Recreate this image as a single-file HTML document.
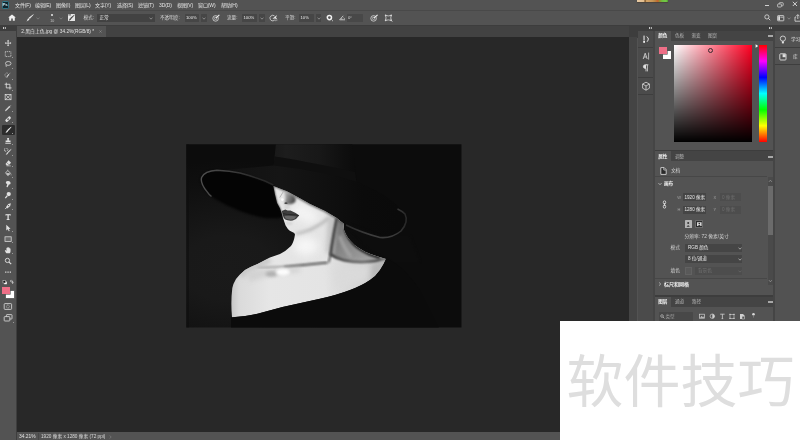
<!DOCTYPE html>
<html lang="zh-CN">
<head>
<meta charset="utf-8">
<title>Photoshop</title>
<style>
html,body{margin:0;padding:0;}
body{width:800px;height:440px;overflow:hidden;background:#535353;position:relative;font-family:"Liberation Sans","Noto Sans CJK SC",sans-serif;color:#d6d6d6;}
.abs{position:absolute;}
.t{position:absolute;white-space:nowrap;font-size:5px;line-height:6px;color:#e4e4e4;letter-spacing:-0.1px;}
.t,.tt,.tb,#wmtext{filter:grayscale(1);}
#menubar{left:0;top:0;width:800px;height:10px;background:#535353;}
#optbar{left:0;top:10.8px;width:800px;height:14.6px;background:#535353;}
#sep1{left:0;top:9.8px;width:800px;height:1px;background:#494949;}
#tabbar{left:0;top:25.4px;width:800px;height:12.6px;background:#3d3d3d;}
#canvas{left:17px;top:37.4px;width:612.4px;height:395px;background:#282828;}
#ltool{left:0;top:30px;width:16px;height:410px;background:#535353;}
#status{left:17px;top:432.4px;width:612.4px;height:8px;background:#535353;}
#tab{left:17px;top:26px;width:88.6px;height:11px;background:#535353;}
#tabrest{left:106.4px;top:26px;width:523px;height:11px;background:#424242;}
#vscroll{left:629.4px;top:37.4px;width:8.1px;height:403px;background:#444444;}
#rdark{left:637.5px;top:25px;width:162.5px;height:415px;background:#3d3d3d;}
#istrip{left:637.5px;top:30.6px;width:15.8px;height:410px;background:#4b4b4b;}
#cpanel{left:655px;top:30.6px;width:118px;height:119.6px;background:#535353;}
#ppanel{left:655px;top:151.4px;width:118px;height:143.6px;background:#535353;}
#lpanel{left:655px;top:296.6px;width:118px;height:144px;background:#535353;}
#farright{left:775px;top:31px;width:25px;height:409px;background:#525252;}
.tabrow{position:absolute;left:655px;width:118px;height:10px;background:#444444;}
.atab{position:absolute;left:655px;width:16px;height:10px;background:#535353;}
.tt{position:absolute;white-space:nowrap;font-size:4.6px;line-height:6px;color:#b4b4b4;}
.tb{position:absolute;white-space:nowrap;font-size:4.6px;line-height:6px;color:#f2f2f2;font-weight:bold;}
.ham{position:absolute;left:767.5px;width:5px;height:3.4px;background:linear-gradient(#a8a8a8 0 0.8px,transparent 0.8px 1.3px,#a8a8a8 1.3px 2.1px,transparent 2.1px 2.6px,#a8a8a8 2.6px 3.4px);}
.fld{position:absolute;height:8px;background:#454545;border-radius:0.5px;}
.fldd{position:absolute;height:8px;background:#4d4d4d;border-radius:0.5px;}
#wm{left:560px;top:321px;width:240px;height:119px;background:#fff;}
#wmtext{left:566.5px;top:347px;font-size:57px;line-height:70px;color:#dedede;white-space:nowrap;letter-spacing:0px;}
</style>
</head>
<body>
<div id="menubar" class="abs"></div>
<div id="sep1" class="abs"></div>
<div id="optbar" class="abs"></div>
<div id="tabbar" class="abs"></div>
<div id="canvas" class="abs"></div>
<div id="ltool" class="abs"></div>
<div id="status" class="abs"></div>
<div id="tab" class="abs"></div>
<div id="tabrest" class="abs"></div>
<div id="vscroll" class="abs"></div>
<div id="rdark" class="abs"></div>
<div id="istrip" class="abs"></div>
<div id="cpanel" class="abs"></div>
<div id="ppanel" class="abs"></div>
<div id="lpanel" class="abs"></div>
<div id="farright" class="abs"></div>
<div class="abs" style="left:653.3px;top:31px;width:1.7px;height:409px;background:#454545;"></div>
<div class="abs" style="left:773px;top:31px;width:2px;height:409px;background:#454545;"></div>

<!-- RIGHT-START -->
<!-- color panel -->
<div class="tabrow" style="top:30.6px;"></div>
<div class="atab" style="top:30.6px;"></div>
<div class="tb" style="left:658.2px;top:32.6px;">颜色</div>
<div class="tt" style="left:675px;top:32.6px;">色板</div>
<div class="tt" style="left:691.5px;top:32.6px;">渐变</div>
<div class="tt" style="left:708px;top:32.6px;">图案</div>
<div class="ham" style="top:34.5px;"></div>
<div class="abs" style="left:663px;top:51px;width:7.8px;height:7.8px;background:#fff;"></div>
<div class="abs" style="left:659px;top:47.1px;width:7.6px;height:7.2px;background:#ee6f87;box-shadow:0 0 0 0.6px #555;"></div>
<div class="abs" style="left:673.6px;top:44.9px;width:78.6px;height:96.8px;background:linear-gradient(to bottom,rgba(0,0,0,0),#000),linear-gradient(to right,#fff,#ff0022);"></div>
<div class="abs" style="left:708px;top:47.5px;width:3.2px;height:3.2px;border:0.7px solid #3a2a30;border-radius:50%;"></div>
<div class="abs" style="left:758.6px;top:44.9px;width:8.6px;height:96.8px;background:linear-gradient(to bottom,#ff0000 0%,#ff00ff 16.6%,#0000ff 33.3%,#00ffff 50%,#00ff00 66.6%,#ffff00 83.3%,#ff0000 100%);"></div>
<svg class="abs" style="left:754.8px;top:43.6px" width="4" height="4" viewBox="0 0 4 4"><path d="M0.6 0.3 L3.2 2 L0.6 3.7 Z" fill="#fff"/></svg>

<!-- properties panel -->
<div class="tabrow" style="top:151.4px;"></div>
<div class="atab" style="top:151.4px;"></div>
<div class="tb" style="left:658.2px;top:153.6px;">属性</div>
<div class="tt" style="left:675px;top:153.6px;">调整</div>
<div class="ham" style="top:155.5px;"></div>
<svg class="abs" style="left:660px;top:166.5px" width="7" height="8" viewBox="0 0 7 8"><path d="M0.8 0.6 H4.2 L6.2 2.6 V7.4 H0.8 Z" fill="#2a2a2a" stroke="#e8e8e8" stroke-width="0.8"/><path d="M3.8 0.8 V3 H6" fill="none" stroke="#e8e8e8" stroke-width="0.7"/></svg>
<div class="tt" style="left:671px;top:168px;color:#dcdcdc;">文档</div>
<div class="abs" style="left:655px;top:176px;width:112px;height:1px;background:#474747;"></div>
<svg class="abs" style="left:657.5px;top:182px" width="4" height="4" viewBox="0 0 4 4"><path d="M0.4 1 L2 2.8 L3.6 1" fill="none" stroke="#c8c8c8" stroke-width="0.7"/></svg>
<div class="tb" style="left:664px;top:181px;">画布</div>
<div class="tt" style="left:677.3px;top:194.7px;font-size:4px;color:#a0a0a0;">W</div>
<div class="fld" style="left:683.4px;top:193.4px;width:22.5px;"></div>
<div class="tt" style="left:684.5px;top:194.5px;color:#e6e6e6;">1920 像素</div>
<div class="tt" style="left:713.6px;top:194.7px;font-size:4px;color:#a0a0a0;">X</div>
<div class="fldd" style="left:719.7px;top:193.4px;width:21.5px;"></div>
<div class="tt" style="left:722px;top:194.5px;color:#6c6c6c;">0 像素</div>
<div class="tt" style="left:677.6px;top:206.9px;font-size:4px;color:#a0a0a0;">H</div>
<div class="fld" style="left:683.4px;top:205.6px;width:22.5px;"></div>
<div class="tt" style="left:684.5px;top:206.7px;color:#e6e6e6;">1280 像素</div>
<div class="tt" style="left:713.6px;top:206.9px;font-size:4px;color:#a0a0a0;">Y</div>
<div class="fldd" style="left:719.7px;top:205.6px;width:21.5px;"></div>
<div class="tt" style="left:722px;top:206.7px;color:#6c6c6c;">0 像素</div>
<svg class="abs" style="left:661.5px;top:199.5px" width="5" height="9" viewBox="0 0 5 9"><rect x="1.3" y="0.8" width="2.4" height="3.2" rx="1.2" fill="none" stroke="#e0e0e0" stroke-width="0.8"/><rect x="1.3" y="5" width="2.4" height="3.2" rx="1.2" fill="none" stroke="#e0e0e0" stroke-width="0.8"/><path d="M2.5 3 V6" stroke="#e0e0e0" stroke-width="0.8"/></svg>
<div class="abs" style="left:685.3px;top:219.6px;width:6.4px;height:8px;background:#b4b4b4;border-radius:0.6px;"></div>
<svg class="abs" style="left:685.3px;top:219.6px" width="6.4" height="8" viewBox="0 0 6.4 8"><circle cx="3.2" cy="3" r="1" fill="#333"/><path d="M1.6 6.8 Q3.2 3.6 4.8 6.8 Z" fill="#333"/></svg>
<div class="abs" style="left:694.6px;top:219.6px;width:8.6px;height:8px;background:#2b2b2b;border:0.5px solid #6a6a6a;box-sizing:border-box;border-radius:0.6px;"></div>
<svg class="abs" style="left:694.6px;top:219.6px" width="8.6" height="8" viewBox="0 0 8.6 8"><rect x="2" y="2.2" width="4.6" height="3.8" fill="#d8d8d8"/><circle cx="4.3" cy="3.6" r="0.8" fill="#2b2b2b"/><path d="M3 6 Q4.3 4 5.6 6 Z" fill="#2b2b2b"/></svg>
<div class="tt" style="left:684.5px;top:233.5px;color:#d2d2d2;font-size:4.8px;">分辨率: 72 像素/英寸</div>
<div class="tt" style="left:670.6px;top:244.5px;color:#d2d2d2;">模式</div>
<div class="fld" style="left:685px;top:243.6px;width:57px;height:8.6px;"></div>
<div class="tt" style="left:688px;top:245px;color:#e6e6e6;">RGB 颜色</div>
<svg class="abs" style="left:737.5px;top:246.5px" width="4" height="3" viewBox="0 0 4 3"><path d="M0.5 0.6 L2 2.2 L3.5 0.6" fill="none" stroke="#c8c8c8" stroke-width="0.7"/></svg>
<div class="fld" style="left:685px;top:254.8px;width:57px;height:8.4px;"></div>
<div class="tt" style="left:688px;top:256px;color:#e6e6e6;">8 位/通道</div>
<svg class="abs" style="left:737.5px;top:257.5px" width="4" height="3" viewBox="0 0 4 3"><path d="M0.5 0.6 L2 2.2 L3.5 0.6" fill="none" stroke="#c8c8c8" stroke-width="0.7"/></svg>
<div class="tt" style="left:670.6px;top:268px;color:#d2d2d2;">填色</div>
<div class="abs" style="left:685px;top:266.8px;width:7px;height:8px;background:#595959;border:0.6px solid #626262;box-sizing:border-box;"></div>
<div class="fldd" style="left:695px;top:266.8px;width:47px;height:8px;"></div>
<div class="tt" style="left:698px;top:268px;color:#727272;">背景色</div>
<svg class="abs" style="left:737.5px;top:269.5px" width="4" height="3" viewBox="0 0 4 3"><path d="M0.5 0.6 L2 2.2 L3.5 0.6" fill="none" stroke="#6c6c6c" stroke-width="0.7"/></svg>
<div class="abs" style="left:655px;top:278.2px;width:112px;height:1px;background:#474747;"></div>
<svg class="abs" style="left:657.8px;top:282.2px" width="4" height="4" viewBox="0 0 4 4"><path d="M1 0.4 L2.8 2 L1 3.6" fill="none" stroke="#c8c8c8" stroke-width="0.7"/></svg>
<div class="tb" style="left:664px;top:280.8px;font-size:5px;">标尺和网格</div>
<!-- scrollbar -->
<div class="abs" style="left:767.6px;top:177px;width:5.4px;height:108px;background:#4a4a4a;"></div>
<div class="abs" style="left:768px;top:185.5px;width:4.6px;height:49.5px;background:#6b6b6b;"></div>
<svg class="abs" style="left:768px;top:179px" width="5" height="4" viewBox="0 0 5 4"><path d="M1 2.8 L2.4 1.2 L3.8 2.8" fill="none" stroke="#a0a0a0" stroke-width="0.7"/></svg>
<svg class="abs" style="left:768px;top:279px" width="5" height="4" viewBox="0 0 5 4"><path d="M1 1.2 L2.4 2.8 L3.8 1.2" fill="none" stroke="#a0a0a0" stroke-width="0.7"/></svg>

<!-- layers panel -->
<div class="tabrow" style="top:296.6px;"></div>
<div class="atab" style="top:296.6px;"></div>
<div class="tb" style="left:658.2px;top:298.8px;">图层</div>
<div class="tt" style="left:675px;top:298.8px;">通道</div>
<div class="tt" style="left:692px;top:298.8px;">路径</div>
<div class="ham" style="top:300.5px;"></div>
<div class="fld" style="left:658.5px;top:312px;width:34px;height:8.5px;background:#484848;"></div>
<svg class="abs" style="left:659.5px;top:313.5px" width="5" height="5" viewBox="0 0 5 5"><circle cx="2" cy="2" r="1.3" fill="none" stroke="#bdbdbd" stroke-width="0.7"/><path d="M3 3 L4.4 4.4" stroke="#bdbdbd" stroke-width="0.8"/></svg>
<div class="tt" style="left:665.5px;top:313.5px;color:#9a9a9a;">类型</div>
<svg class="abs" style="left:698px;top:312px" width="60" height="9" viewBox="0 0 60 9">
 <rect x="1.6" y="2.2" width="4.8" height="4" fill="none" stroke="#cfcfcf" stroke-width="0.7"/><path d="M2 5.8 L3.6 4 L4.6 5 L5.4 4.4 L6.2 5.8 Z" fill="#cfcfcf"/>
 <circle cx="14.3" cy="4.2" r="2.2" fill="none" stroke="#cfcfcf" stroke-width="0.7"/><path d="M14.3 2 A2.2 2.2 0 0 1 14.3 6.4 Z" fill="#cfcfcf"/>
 <path d="M22.2 2.2 H26.6 M24.4 2.2 V6.6 M23.6 6.6 H25.2" stroke="#cfcfcf" stroke-width="0.8" fill="none"/>
 <rect x="32" y="2.4" width="4" height="4" fill="none" stroke="#cfcfcf" stroke-width="0.6"/><rect x="31.4" y="1.8" width="1.2" height="1.2" fill="#cfcfcf"/><rect x="35.4" y="1.8" width="1.2" height="1.2" fill="#cfcfcf"/><rect x="31.4" y="5.8" width="1.2" height="1.2" fill="#cfcfcf"/><rect x="35.4" y="5.8" width="1.2" height="1.2" fill="#cfcfcf"/>
 <path d="M42 2 H45 L46.4 3.4 V7 H42 Z" fill="#cfcfcf"/><rect x="44" y="4.2" width="2.6" height="2.8" fill="#535353" stroke="#cfcfcf" stroke-width="0.5"/>
 <circle cx="55.5" cy="2.2" r="1.3" fill="#d8d8d8"/><path d="M55.5 3.2 V5.6" stroke="#8a8a8a" stroke-width="0.7"/>
</svg>

<!-- far right strip -->
<div class="abs" style="left:775px;top:47px;width:25px;height:0.8px;background:#3e3e3e;"></div>
<div class="abs" style="left:775px;top:63.6px;width:25px;height:0.8px;background:#3e3e3e;"></div>
<svg class="abs" style="left:779px;top:35px" width="8" height="10" viewBox="0 0 8 10"><circle cx="3.9" cy="3.6" r="2.6" fill="none" stroke="#e4e4e4" stroke-width="0.8"/><rect x="2.9" y="6.3" width="2" height="2.1" fill="#e4e4e4"/></svg>
<div class="tt" style="left:791px;top:37px;color:#dcdcdc;">学习</div>
<svg class="abs" style="left:779px;top:53px" width="8" height="8" viewBox="0 0 8 8"><rect x="0.8" y="0.8" width="6.2" height="6.2" rx="0.8" fill="none" stroke="#e0e0e0" stroke-width="0.9"/><rect x="3.6" y="1.2" width="3" height="3" fill="#e0e0e0"/></svg>
<div class="tt" style="left:793px;top:54.3px;color:#dcdcdc;">库</div>

<!-- icon strip (left of panels) -->
<div class="abs" style="left:637.5px;top:46.6px;width:15.8px;height:0.8px;background:#3e3e3e;"></div>
<div class="abs" style="left:637.5px;top:76.5px;width:15.8px;height:0.8px;background:#3e3e3e;"></div>
<div class="abs" style="left:637.5px;top:93.6px;width:15.8px;height:0.8px;background:#3e3e3e;"></div>
<svg class="abs" style="left:641px;top:34px" width="10" height="11" viewBox="0 0 10 11"><rect x="2.3" y="1.6" width="1.5" height="5" fill="#bdbdbd"/><rect x="2.2" y="7" width="1.8" height="1.8" fill="#f0f0f0"/><path d="M5.6 2.6 Q8 3.6 7.2 6 L6 7.8" fill="none" stroke="#e4e4e4" stroke-width="1"/></svg>
<svg class="abs" style="left:641px;top:51px" width="10" height="11" viewBox="0 0 10 11"><path d="M2.2 8 L4.2 2.2 L6.2 8 M3 6 H5.4" fill="none" stroke="#e0e0e0" stroke-width="0.8"/><path d="M7.6 1.6 V8.6" stroke="#e0e0e0" stroke-width="0.7"/></svg>
<svg class="abs" style="left:641px;top:62.5px" width="10" height="10" viewBox="0 0 10 10"><path d="M5.6 1.8 H4.2 A1.8 1.8 0 0 0 4.2 5.4 H5 V8.4 M6.4 1.8 V8.4 M5 1.8 H7.4" fill="none" stroke="#e0e0e0" stroke-width="0.8"/><path d="M4.2 1.8 A1.8 1.8 0 0 0 4.2 5.4 H5 V1.8 Z" fill="#e0e0e0"/></svg>
<svg class="abs" style="left:641px;top:81px" width="10" height="11" viewBox="0 0 10 11"><path d="M5 1.2 L8.4 3 V7.2 L5 9.2 L1.6 7.2 V3 Z M1.6 3 L5 5 L8.4 3 M5 5 V9.2" fill="none" stroke="#d8d8d8" stroke-width="0.8"/></svg>
<!-- small collapse marks -->
<div class="abs" style="left:648.5px;top:27.3px;width:1.3px;height:1.3px;background:#c8c8c8;box-shadow:1.8px 0 0 #c8c8c8;"></div>
<div class="abs" style="left:768.5px;top:27.3px;width:1.3px;height:1.3px;background:#c8c8c8;box-shadow:1.8px 0 0 #c8c8c8;"></div>
<!-- RIGHT-END -->

<!-- LEFT-START -->
<div class="abs" style="left:0;top:25.4px;width:16.5px;height:5.4px;background:#3d3d3d;"></div>
<div class="abs" style="left:3.2px;top:27.3px;width:1.3px;height:1.3px;background:#c8c8c8;box-shadow:1.8px 0 0 #c8c8c8;"></div>
<div class="abs" style="left:16.2px;top:30px;width:0.8px;height:410px;background:#3e3e3e;"></div>
<div class="abs" style="left:1.5px;top:124.7px;width:13px;height:10.4px;background:#2c2c2c;border-radius:1px;"></div>
<svg class="abs" style="left:3.9px;top:38.6px" width="8.2" height="8.2" viewBox="0 0 10 10"><path d="M5 1 L6.4 2.6 H5.5 V4.5 H7.4 V3.6 L9 5 L7.4 6.4 V5.5 H5.5 V7.4 H6.4 L5 9 L3.6 7.4 H4.5 V5.5 H2.6 V6.4 L1 5 L2.6 3.6 V4.5 H4.5 V2.6 H3.6 Z" fill="#e0e0e0"/></svg>
<svg class="abs" style="left:3.9px;top:49.5px" width="8.2" height="8.2" viewBox="0 0 10 10"><rect x="1.6" y="2" width="6.8" height="6" fill="none" stroke="#e0e0e0" stroke-width="0.9" stroke-dasharray="1.3 0.9"/></svg>
<div class="abs" style="left:12.4px;top:56.8px;width:1.1px;height:1.1px;background:#9a9a9a;"></div>
<svg class="abs" style="left:3.9px;top:60.4px" width="8.2" height="8.2" viewBox="0 0 10 10"><ellipse cx="5.2" cy="4.2" rx="3.4" ry="2.4" fill="none" stroke="#e0e0e0" stroke-width="0.9"/><path d="M2.6 6 Q2 7.6 3.2 8.6" fill="none" stroke="#e0e0e0" stroke-width="0.8"/></svg>
<div class="abs" style="left:12.4px;top:67.7px;width:1.1px;height:1.1px;background:#9a9a9a;"></div>
<svg class="abs" style="left:3.9px;top:71.3px" width="8.2" height="8.2" viewBox="0 0 10 10"><path d="M8.6 1.6 L5 5.6 L4 6.6 L3.4 6 L4.4 5 Z" fill="#e0e0e0"/><ellipse cx="3.4" cy="5" rx="2.2" ry="2.6" fill="none" stroke="#e0e0e0" stroke-width="0.7" stroke-dasharray="1 0.8"/><path d="M3 7.6 L4.2 6.4" stroke="#e0e0e0" stroke-width="1.2"/></svg>
<div class="abs" style="left:12.4px;top:78.6px;width:1.1px;height:1.1px;background:#9a9a9a;"></div>
<svg class="abs" style="left:3.9px;top:82.2px" width="8.2" height="8.2" viewBox="0 0 10 10"><path d="M2.8 0.8 V7.2 H9.2 M0.8 2.8 H7.2 V9.2" fill="none" stroke="#e0e0e0" stroke-width="1"/></svg>
<div class="abs" style="left:12.4px;top:89.5px;width:1.1px;height:1.1px;background:#9a9a9a;"></div>
<svg class="abs" style="left:3.9px;top:93.1px" width="8.2" height="8.2" viewBox="0 0 10 10"><rect x="1.4" y="1.8" width="7.2" height="6.4" fill="none" stroke="#e0e0e0" stroke-width="0.9"/><path d="M1.4 1.8 L8.6 8.2 M8.6 1.8 L1.4 8.2" stroke="#e0e0e0" stroke-width="0.8"/></svg>
<svg class="abs" style="left:3.9px;top:104.0px" width="8.2" height="8.2" viewBox="0 0 10 10"><path d="M8.6 1.4 L7 3 L7.6 3.6 L6.6 4.2 L3 7.8 L1.6 8.6 L2.2 7 L5.8 3.4 L6.4 2.4 L7 3" fill="#e0e0e0" stroke="#e0e0e0" stroke-width="0.5"/></svg>
<div class="abs" style="left:12.4px;top:111.3px;width:1.1px;height:1.1px;background:#9a9a9a;"></div>
<svg class="abs" style="left:3.9px;top:114.9px" width="8.2" height="8.2" viewBox="0 0 10 10"><rect x="-1.6" y="-3.9" width="3.2" height="7.8" rx="1.1" transform="translate(5 5) rotate(45)" fill="#e0e0e0"/><rect x="-0.9" y="-1" width="1.8" height="2" transform="translate(5 5) rotate(45)" fill="#535353"/></svg>
<div class="abs" style="left:12.4px;top:122.2px;width:1.1px;height:1.1px;background:#9a9a9a;"></div>
<svg class="abs" style="left:3.9px;top:125.8px" width="8.2" height="8.2" viewBox="0 0 10 10"><path d="M8.8 1.2 L5.4 5.4 L4.6 4.6 Z" fill="#fff" stroke="#fff" stroke-width="0.6"/><path d="M4.4 5 L5.2 5.8 Q4.4 7.8 1.6 8.6 Q3.2 7.2 3 6 Z" fill="#fff"/></svg>
<div class="abs" style="left:12.4px;top:133.1px;width:1.1px;height:1.1px;background:#9a9a9a;"></div>
<svg class="abs" style="left:3.9px;top:136.7px" width="8.2" height="8.2" viewBox="0 0 10 10"><path d="M3.8 1.2 H6.2 L5.8 4.4 H8 V6.2 H2 V4.4 H4.2 Z" fill="#e0e0e0"/><rect x="1.6" y="7" width="6.8" height="1.2" fill="#e0e0e0"/></svg>
<div class="abs" style="left:12.4px;top:144.0px;width:1.1px;height:1.1px;background:#9a9a9a;"></div>
<svg class="abs" style="left:3.9px;top:147.6px" width="8.2" height="8.2" viewBox="0 0 10 10"><path d="M8.8 1.4 L5.6 5.4 L4.8 4.6 Z" fill="#e0e0e0" stroke="#e0e0e0" stroke-width="0.5"/><path d="M4.6 5 L5.4 5.8 Q4.4 7.8 2 8.6 Q3.2 7.2 3.2 6 Z" fill="#e0e0e0"/><path d="M1.4 4 A2.2 2.2 0 1 1 4 3.6 M1.4 4 L1 2.6 M1.4 4 L2.8 3.8" fill="none" stroke="#e0e0e0" stroke-width="0.7"/></svg>
<div class="abs" style="left:12.4px;top:154.9px;width:1.1px;height:1.1px;background:#9a9a9a;"></div>
<svg class="abs" style="left:3.9px;top:158.5px" width="8.2" height="8.2" viewBox="0 0 10 10"><path d="M5.6 1.6 L8.6 4.6 L5.4 7.8 H3.4 L1.8 6.2 Z" fill="#e0e0e0"/><path d="M3.2 4.2 L6.2 7.2" stroke="#535353" stroke-width="0.7"/><path d="M3 8.4 H8.4" stroke="#e0e0e0" stroke-width="0.7"/></svg>
<div class="abs" style="left:12.4px;top:165.8px;width:1.1px;height:1.1px;background:#9a9a9a;"></div>
<svg class="abs" style="left:3.9px;top:169.4px" width="8.2" height="8.2" viewBox="0 0 10 10"><path d="M4.6 1.8 L8 5.2 L5 8.2 L1.8 5 Z" fill="none" stroke="#e0e0e0" stroke-width="0.9"/><path d="M2.4 5.2 H7.4 L5 7.6 Z" fill="#e0e0e0"/><path d="M8.6 6 Q9.4 7.4 8.6 8 Q7.8 7.4 8.6 6 Z" fill="#e0e0e0"/><path d="M4.6 1.8 V0.8" stroke="#e0e0e0" stroke-width="0.7"/></svg>
<div class="abs" style="left:12.4px;top:176.7px;width:1.1px;height:1.1px;background:#9a9a9a;"></div>
<svg class="abs" style="left:3.9px;top:180.3px" width="8.2" height="8.2" viewBox="0 0 10 10"><path d="M3 1.6 Q5 0.6 6.6 1.6 Q8.4 2.6 8 4.6 Q7.4 5.8 6 5.4 L4.4 8.8 L3 8.4 L4 5 Q2 4.6 2.2 3 Z" fill="#e0e0e0"/></svg>
<div class="abs" style="left:12.4px;top:187.6px;width:1.1px;height:1.1px;background:#9a9a9a;"></div>
<svg class="abs" style="left:3.9px;top:191.2px" width="8.2" height="8.2" viewBox="0 0 10 10"><circle cx="5.8" cy="3.8" r="2.6" fill="#e0e0e0"/><path d="M4 5.8 L1.6 8.6" stroke="#e0e0e0" stroke-width="1.5"/></svg>
<div class="abs" style="left:12.4px;top:198.5px;width:1.1px;height:1.1px;background:#9a9a9a;"></div>
<svg class="abs" style="left:3.9px;top:202.1px" width="8.2" height="8.2" viewBox="0 0 10 10"><path d="M8.4 1.6 L5.2 2.4 L2.4 6.4 L3.8 7.8 L7.6 5 Z" fill="#e0e0e0"/><circle cx="5.6" cy="4.4" r="0.8" fill="#535353"/><path d="M3 7 L1.4 8.6" stroke="#e0e0e0" stroke-width="1.1"/></svg>
<div class="abs" style="left:12.4px;top:209.4px;width:1.1px;height:1.1px;background:#9a9a9a;"></div>
<svg class="abs" style="left:3.9px;top:213.0px" width="8.2" height="8.2" viewBox="0 0 10 10"><path d="M1.8 1.6 H8.2 V3.2 H7.4 V2.6 H5.7 V7.6 H6.8 V8.4 H3.2 V7.6 H4.3 V2.6 H2.6 V3.2 H1.8 Z" fill="#f0f0f0"/></svg>
<svg class="abs" style="left:3.9px;top:223.9px" width="8.2" height="8.2" viewBox="0 0 10 10"><path d="M2.8 1 L2.8 8 L4.6 6.4 L5.8 9 L7 8.4 L5.8 6 L8 5.8 Z" fill="#e0e0e0"/></svg>
<div class="abs" style="left:12.4px;top:231.2px;width:1.1px;height:1.1px;background:#9a9a9a;"></div>
<svg class="abs" style="left:3.9px;top:234.8px" width="8.2" height="8.2" viewBox="0 0 10 10"><rect x="1.2" y="2.2" width="7.6" height="5.6" fill="#6a6a6a" stroke="#e0e0e0" stroke-width="0.9"/></svg>
<div class="abs" style="left:12.4px;top:242.1px;width:1.1px;height:1.1px;background:#9a9a9a;"></div>
<svg class="abs" style="left:3.9px;top:245.7px" width="8.2" height="8.2" viewBox="0 0 10 10"><path d="M3 9 Q1.6 7 1 5.4 Q1.4 4.6 2.4 5.4 L3 6.2 V2.4 Q3.6 1.6 4.2 2.4 V1.6 Q4.9 0.8 5.5 1.6 V2 Q6.2 1.4 6.8 2.2 V3 Q7.4 2.6 8 3.4 V6.4 Q8 8 7 9 Z" fill="#e0e0e0"/></svg>
<div class="abs" style="left:12.4px;top:253.0px;width:1.1px;height:1.1px;background:#9a9a9a;"></div>
<svg class="abs" style="left:3.9px;top:256.6px" width="8.2" height="8.2" viewBox="0 0 10 10"><circle cx="4.2" cy="4.2" r="2.6" fill="none" stroke="#e0e0e0" stroke-width="1.1"/><path d="M6.2 6.2 L8.8 8.8" stroke="#e0e0e0" stroke-width="1.4"/></svg>
<svg class="abs" style="left:3.9px;top:267.5px" width="8.2" height="8.2" viewBox="0 0 10 10"><rect x="1.4" y="4.3" width="1.5" height="1.5" fill="#e0e0e0"/><rect x="4.2" y="4.3" width="1.5" height="1.5" fill="#e0e0e0"/><rect x="7" y="4.3" width="1.5" height="1.5" fill="#e0e0e0"/></svg>
<svg class="abs" style="left:2px;top:279px" width="14" height="7" viewBox="0 0 14 7"><rect x="2.2" y="2.6" width="2.6" height="2.6" fill="#fff"/><rect x="1" y="1.4" width="2.6" height="2.6" fill="#111" stroke="#ddd" stroke-width="0.5"/><path d="M8.4 2 H10.6 V4.4 M10.6 4.4 L9.8 3.4 M10.6 4.4 L11.4 3.4 M8.4 2 L9.2 1.3 M8.4 2 L9.2 2.7" fill="none" stroke="#e0e0e0" stroke-width="0.7"/></svg>
<div class="abs" style="left:6.2px;top:290.8px;width:7.8px;height:7.6px;background:#fff;box-shadow:0 0 0 0.5px #777;"></div>
<div class="abs" style="left:2px;top:287px;width:7.6px;height:7.4px;background:#ee6f87;box-shadow:0 0 0 0.6px #535353;"></div>
<svg class="abs" style="left:3px;top:301.5px" width="10" height="9" viewBox="0 0 10 9"><rect x="1.2" y="1.6" width="7.4" height="5.8" rx="0.8" fill="none" stroke="#e0e0e0" stroke-width="0.8"/><circle cx="4.9" cy="4.5" r="1.5" fill="none" stroke="#e0e0e0" stroke-width="0.7" stroke-dasharray="0.8 0.6"/></svg>
<svg class="abs" style="left:3px;top:313px" width="11" height="10" viewBox="0 0 11 10"><rect x="3.4" y="1.6" width="5.6" height="4.4" rx="0.6" fill="none" stroke="#e0e0e0" stroke-width="0.8"/><rect x="1.2" y="3.6" width="5.6" height="4.4" rx="0.6" fill="#535353" stroke="#e0e0e0" stroke-width="0.8"/></svg>
<div class="abs" style="left:13px;top:321.5px;width:1.2px;height:1.2px;background:#9a9a9a;"></div>
<!-- LEFT-END -->

<!-- TOP-START -->
<!-- PS logo -->
<div class="abs" style="left:1.8px;top:1.4px;width:7.4px;height:7.2px;background:#10242c;border:0.8px solid #2f7688;box-sizing:border-box;border-radius:1.2px;"></div>
<div class="abs" style="left:2.6px;top:2.2px;font-size:4.4px;line-height:5.4px;font-weight:bold;color:#d4eef6;opacity:0.99;letter-spacing:-0.3px;">Ps</div>
<!-- top small thumbnail strip -->
<div class="abs" style="left:637px;top:0;width:31px;height:2px;background:linear-gradient(to right,#e6c9a4 0%,#e2bd8c 22%,#7a5228 26%,#d4a468 31%,#c49456 50%,#b8803e 60%,#c8602c 67%,#8a9a30 74%,#6cc040 82%,#74c848 94%,#4c9a2c 100%);box-shadow:0 0.6px 0.8px rgba(60,40,20,0.5);"></div>
<!-- window controls -->
<div class="abs" style="left:765px;top:5.2px;width:4.4px;height:0.9px;background:#d0d0d0;"></div>
<svg class="abs" style="left:776.5px;top:1.5px" width="7" height="6" viewBox="0 0 7 6"><rect x="0.6" y="2" width="3.8" height="3" rx="0.6" fill="none" stroke="#d0d0d0" stroke-width="0.8"/><path d="M2.2 2 V1.2 Q2.2 0.7 2.8 0.7 H5.6 Q6.2 0.7 6.2 1.2 V3.2 Q6.2 3.8 5.6 3.8 H4.6" fill="none" stroke="#d0d0d0" stroke-width="0.8"/></svg>
<svg class="abs" style="left:791.5px;top:1.2px" width="6" height="6" viewBox="0 0 6 6"><path d="M0.8 0.8 L5 5 M5 0.8 L0.8 5" stroke="#e0e0e0" stroke-width="0.9"/></svg>
<!-- options bar right -->
<svg class="abs" style="left:763.5px;top:14.2px" width="7" height="7" viewBox="0 0 7 7"><circle cx="2.9" cy="2.9" r="2.1" fill="none" stroke="#e0e0e0" stroke-width="0.8"/><path d="M4.4 4.4 L6.2 6.2" stroke="#e0e0e0" stroke-width="0.9"/></svg>
<svg class="abs" style="left:776.5px;top:14.6px" width="8" height="7" viewBox="0 0 8 7"><rect x="0.6" y="0.6" width="6.2" height="5.2" rx="0.5" fill="none" stroke="#e0e0e0" stroke-width="0.8"/><rect x="1.2" y="1.2" width="1.8" height="4" fill="#e0e0e0"/><path d="M3.4 2.2 H6.4" stroke="#e0e0e0" stroke-width="0.7"/></svg>
<svg class="abs" style="left:787px;top:16.5px" width="4" height="3" viewBox="0 0 4 3"><path d="M0.5 0.6 L2 2.2 L3.5 0.6" fill="none" stroke="#9a9a9a" stroke-width="0.7"/></svg>
<svg class="abs" style="left:794px;top:13.6px" width="7" height="8" viewBox="0 0 7 8"><path d="M2.2 3 H1 V7.2 H6.6 V3 H5.6" fill="none" stroke="#e0e0e0" stroke-width="0.8"/><path d="M3.8 5 V0.8 M2.4 2 L3.8 0.6 L5.2 2" fill="none" stroke="#e0e0e0" stroke-width="0.8"/></svg>

<!-- options bar left -->
<svg class="abs" style="left:7.7px;top:14.4px" width="8" height="7" viewBox="0 0 8 7"><path d="M4 0.4 L7.8 3.6 H6.8 V6.8 H4.8 V4.6 H3.2 V6.8 H1.2 V3.6 H0.2 Z" fill="#f0f0f0"/></svg>
<svg class="abs" style="left:25.5px;top:13.8px" width="8" height="8" viewBox="0 0 8 8"><path d="M7.4 0.6 L3.8 4.6 L3 3.8 Z" fill="#f0f0f0" stroke="#f0f0f0" stroke-width="0.5"/><path d="M2.8 4.2 L3.6 5 Q2.8 6.8 0.4 7.4 Q1.8 6.2 1.6 5 Z" fill="#f0f0f0"/></svg>
<svg class="abs" style="left:36px;top:16.6px" width="4" height="3" viewBox="0 0 4 3"><path d="M0.5 0.6 L2 2.2 L3.5 0.6" fill="none" stroke="#8c8c8c" stroke-width="0.7"/></svg>
<div class="abs" style="left:50.8px;top:13.8px;width:2.6px;height:2.6px;border-radius:50%;background:#e8e8e8;"></div>
<div class="tt" style="left:50.2px;top:19px;font-size:3.6px;line-height:5px;color:#c4c4c4;">10</div>
<svg class="abs" style="left:59px;top:16.6px" width="4" height="3" viewBox="0 0 4 3"><path d="M0.5 0.6 L2 2.2 L3.5 0.6" fill="none" stroke="#8c8c8c" stroke-width="0.7"/></svg>
<div class="abs" style="left:68px;top:14.2px;width:7.4px;height:7.2px;background:#e6e6e6;border-radius:0.5px;"></div>
<svg class="abs" style="left:68px;top:14.2px" width="7.4" height="7.2" viewBox="0 0 7.4 7.2"><path d="M0.4 0.4 H3 V1.4 H0.4 Z" fill="#555"/><path d="M6.4 1 L3.4 4.4 L2.8 3.8 Z M2.6 4.2 L3.2 4.8 Q2.6 6 1 6.4 Q2 5.6 1.8 4.8 Z" fill="#333" stroke="#333" stroke-width="0.4"/></svg>
<div class="tt" style="left:83.5px;top:15.2px;color:#d4d4d4;">模式:</div>
<div class="fld" style="left:97px;top:13.6px;width:57.5px;height:8.8px;background:#424242;"></div>
<div class="tt" style="left:99.5px;top:15.2px;color:#e8e8e8;">正常</div>
<svg class="abs" style="left:149px;top:16.6px" width="4" height="3" viewBox="0 0 4 3"><path d="M0.5 0.6 L2 2.2 L3.5 0.6" fill="none" stroke="#a8a8a8" stroke-width="0.7"/></svg>
<div class="tt" style="left:160px;top:15.2px;color:#d4d4d4;">不透明度:</div>
<div class="fld" style="left:185px;top:13.8px;width:13.5px;height:8.4px;background:#464646;"></div>
<div class="tt" style="left:186px;top:15.3px;color:#e8e8e8;font-size:4.2px;">100%</div>
<div class="fld" style="left:200.6px;top:13.8px;width:6px;height:8.4px;background:#464646;"></div>
<svg class="abs" style="left:201.6px;top:16.6px" width="4" height="3" viewBox="0 0 4 3"><path d="M0.5 0.6 L2 2.2 L3.5 0.6" fill="none" stroke="#a8a8a8" stroke-width="0.7"/></svg>
<svg class="abs" style="left:212px;top:14px" width="8" height="8" viewBox="0 0 8 8"><circle cx="3.6" cy="4.4" r="2.8" fill="none" stroke="#d8d8d8" stroke-width="0.8"/><circle cx="3.6" cy="4.4" r="1.2" fill="none" stroke="#d8d8d8" stroke-width="0.6"/><path d="M3.8 4.2 L7.4 0.8" stroke="#f0f0f0" stroke-width="1.1"/></svg>
<div class="tt" style="left:227px;top:15.2px;color:#d4d4d4;">流量:</div>
<div class="fld" style="left:242px;top:13.8px;width:14.5px;height:8.4px;background:#464646;"></div>
<div class="tt" style="left:243.5px;top:15.3px;color:#e8e8e8;font-size:4.2px;">100%</div>
<div class="fld" style="left:258.8px;top:13.8px;width:6px;height:8.4px;background:#464646;"></div>
<svg class="abs" style="left:259.8px;top:16.6px" width="4" height="3" viewBox="0 0 4 3"><path d="M0.5 0.6 L2 2.2 L3.5 0.6" fill="none" stroke="#a8a8a8" stroke-width="0.7"/></svg>
<svg class="abs" style="left:269px;top:14px" width="9" height="8" viewBox="0 0 9 8"><path d="M5 6.6 A2.8 2.8 0 1 1 5.6 2" fill="none" stroke="#d8d8d8" stroke-width="0.8"/><path d="M3.4 4.8 L8 1 L7 3.4 L8.4 5.4 L6 4.6 Z" fill="#e8e8e8"/><path d="M5.4 5.4 V7 M6.6 5.6 V7.2 M7.8 5.6 V7" stroke="#d8d8d8" stroke-width="0.5"/></svg>
<div class="tt" style="left:285px;top:15.2px;color:#d4d4d4;">平滑:</div>
<div class="fld" style="left:299px;top:13.8px;width:14.5px;height:8.4px;background:#464646;"></div>
<div class="tt" style="left:300.5px;top:15.3px;color:#e8e8e8;font-size:4.2px;">10%</div>
<div class="fld" style="left:315.8px;top:13.8px;width:5.6px;height:8.4px;background:#464646;"></div>
<svg class="abs" style="left:316.6px;top:16.6px" width="4" height="3" viewBox="0 0 4 3"><path d="M0.5 0.6 L2 2.2 L3.5 0.6" fill="none" stroke="#a8a8a8" stroke-width="0.7"/></svg>
<svg class="abs" style="left:325.5px;top:14.2px" width="8" height="8" viewBox="0 0 8 8"><circle cx="3.4" cy="3.6" r="2.1" fill="none" stroke="#f0f0f0" stroke-width="1.5"/><rect x="6" y="6.2" width="1" height="1" fill="#bdbdbd"/></svg>
<svg class="abs" style="left:338.5px;top:15px" width="7" height="6" viewBox="0 0 7 6"><path d="M0.6 4.8 H6 M0.6 4.8 L4.2 0.8" fill="none" stroke="#d8d8d8" stroke-width="0.8"/><path d="M3 4.8 A2.4 2.4 0 0 0 2.4 3" fill="none" stroke="#d8d8d8" stroke-width="0.6"/><path d="M4.4 2.6 L6 4.2" stroke="#d8d8d8" stroke-width="0.6"/></svg>
<div class="fld" style="left:346.5px;top:13.8px;width:16.5px;height:8.4px;background:#484848;"></div>
<div class="tt" style="left:348px;top:15.3px;color:#d8d8d8;font-size:4.2px;">0°</div>
<svg class="abs" style="left:370px;top:14px" width="9" height="8" viewBox="0 0 9 8"><circle cx="3.6" cy="4.4" r="2.8" fill="none" stroke="#d8d8d8" stroke-width="0.8"/><circle cx="3.6" cy="4.4" r="1.2" fill="none" stroke="#d8d8d8" stroke-width="0.6"/><path d="M3.8 4.2 L7.6 0.8" stroke="#f0f0f0" stroke-width="1.1"/></svg>
<svg class="abs" style="left:384px;top:14px" width="9" height="8" viewBox="0 0 9 8"><path d="M1.6 1.4 Q4.4 2.4 7.2 1.4 Q6.4 3.8 7.2 6.4 Q4.4 5.4 1.6 6.4 Q2.4 3.8 1.6 1.4 Z" fill="none" stroke="#d8d8d8" stroke-width="0.8"/><circle cx="1.6" cy="1.4" r="0.8" fill="#d8d8d8"/><circle cx="7.2" cy="1.4" r="0.8" fill="#d8d8d8"/><circle cx="1.6" cy="6.4" r="0.8" fill="#d8d8d8"/><circle cx="7.2" cy="6.4" r="0.8" fill="#d8d8d8"/><path d="M7.6 6.8 L8.6 7.8" stroke="#d8d8d8" stroke-width="0.6"/></svg>

<!-- document tab -->
<div class="tt" style="left:21.3px;top:28.6px;color:#e0e0e0;font-size:4.8px;">2.黑白上色.jpg @ 34.2%(RGB/8) *</div>
<svg class="abs" style="left:98.6px;top:30.2px" width="3" height="3" viewBox="0 0 3 3"><path d="M0.4 0.4 L2.6 2.6 M2.6 0.4 L0.4 2.6" stroke="#9a9a9a" stroke-width="0.5"/></svg>

<!-- status bar -->
<div class="tt" style="left:19px;top:433.6px;color:#e0e0e0;font-size:4.9px;">34.21%</div>
<div class="tt" style="left:41px;top:433.6px;color:#d8d8d8;font-size:4.7px;">1920 像素 x 1280 像素 (72 ppi)</div>
<svg class="abs" style="left:109.2px;top:434.5px" width="3" height="4" viewBox="0 0 3 4"><path d="M0.8 0.5 L2.2 2 L0.8 3.5" fill="none" stroke="#8c8c8c" stroke-width="0.6"/></svg>
<div class="abs" style="left:37.5px;top:432.6px;width:0.7px;height:7px;background:#474747;"></div>
<!-- TOP-END -->

<!-- MENU TEXT -->
<div class="t" style="left:15px;top:2px;">文件(F)</div>
<div class="t" style="left:35px;top:2px;">编辑(E)</div>
<div class="t" style="left:56px;top:2px;">图像(I)</div>
<div class="t" style="left:75px;top:2px;">图层(L)</div>
<div class="t" style="left:95px;top:2px;">文字(Y)</div>
<div class="t" style="left:117px;top:2px;">选择(S)</div>
<div class="t" style="left:138px;top:2px;">滤镜(T)</div>
<div class="t" style="left:159px;top:2px;">3D(D)</div>
<div class="t" style="left:177px;top:2px;">视图(V)</div>
<div class="t" style="left:198px;top:2px;">窗口(W)</div>
<div class="t" style="left:221px;top:2px;">帮助(H)</div>

<!-- PHOTO -->
<!--PHOTO-START-->
<svg class="abs" style="left:0;top:0" width="800" height="440" viewBox="0 0 800 440">
<defs>
  <clipPath id="pc"><rect x="186.3" y="144.3" width="275.2" height="183.2"/></clipPath>
  <radialGradient id="bgl" gradientUnits="userSpaceOnUse" cx="228" cy="268" r="150" gradientTransform="translate(0 268) scale(1 0.72) translate(0 -268)">
    <stop offset="0" stop-color="#1a1a1a"/><stop offset="0.3" stop-color="#191919"/><stop offset="0.55" stop-color="#141414"/><stop offset="0.8" stop-color="#0f0f0f"/><stop offset="1" stop-color="#0c0c0c"/>
  </radialGradient>
  <linearGradient id="crown" gradientUnits="userSpaceOnUse" x1="274" y1="0" x2="356" y2="0">
    <stop offset="0" stop-color="#191919"/><stop offset="0.15" stop-color="#1d1d1d"/><stop offset="0.55" stop-color="#181818"/><stop offset="0.85" stop-color="#0f0f0f"/><stop offset="1" stop-color="#0b0b0b"/>
  </linearGradient>
  <linearGradient id="brimtop" gradientUnits="userSpaceOnUse" x1="215" y1="0" x2="400" y2="0">
    <stop offset="0" stop-color="#111111"/><stop offset="0.35" stop-color="#151515"/><stop offset="0.6" stop-color="#101010"/><stop offset="0.8" stop-color="#0b0b0b"/><stop offset="1" stop-color="#0a0a0a"/>
  </linearGradient>
  <linearGradient id="skin" gradientUnits="userSpaceOnUse" x1="231" y1="0" x2="388" y2="0">
    <stop offset="0" stop-color="#c6c6c6"/><stop offset="0.05" stop-color="#dadada"/><stop offset="0.25" stop-color="#e6e6e6"/><stop offset="0.6" stop-color="#e4e4e4"/><stop offset="0.85" stop-color="#d0d0d0"/><stop offset="1" stop-color="#b2b2b2"/>
  </linearGradient>
  <linearGradient id="neckr" gradientUnits="userSpaceOnUse" x1="336" y1="222" x2="380" y2="258">
    <stop offset="0" stop-color="#707070"/><stop offset="0.4" stop-color="#888888"/><stop offset="1" stop-color="#a6a6a6"/>
  </linearGradient>
  <linearGradient id="rimg" gradientUnits="userSpaceOnUse" x1="200" y1="0" x2="276" y2="0">
    <stop offset="0" stop-color="#4e4e4e"/><stop offset="0.35" stop-color="#404040"/><stop offset="0.7" stop-color="#2c2c2c"/><stop offset="1" stop-color="#242424"/>
  </linearGradient>
  <linearGradient id="rimg2" gradientUnits="userSpaceOnUse" x1="346" y1="0" x2="408" y2="0"><stop offset="0" stop-color="#2a2a2a"/><stop offset="0.4" stop-color="#3e3e3e"/><stop offset="0.8" stop-color="#3a3a3a"/><stop offset="1" stop-color="#242424"/></linearGradient>
  <linearGradient id="noseg" gradientUnits="userSpaceOnUse" x1="283" y1="196" x2="296" y2="201">
    <stop offset="0" stop-color="#bcbcbc"/><stop offset="0.4" stop-color="#848484"/><stop offset="1" stop-color="#3a3a3a"/>
  </linearGradient>
  <filter color-interpolation-filters="sRGB" id="b03" x="-20%" y="-20%" width="140%" height="140%"><feGaussianBlur stdDeviation="0.35"/></filter>
  <filter color-interpolation-filters="sRGB" id="b05" x="-20%" y="-20%" width="140%" height="140%"><feGaussianBlur stdDeviation="0.5"/></filter>
  <filter color-interpolation-filters="sRGB" id="b08" x="-30%" y="-30%" width="160%" height="160%"><feGaussianBlur stdDeviation="0.8"/></filter>
  <filter color-interpolation-filters="sRGB" id="b1" x="-30%" y="-30%" width="160%" height="160%"><feGaussianBlur stdDeviation="1"/></filter>
  <filter color-interpolation-filters="sRGB" id="b15" x="-40%" y="-40%" width="180%" height="180%"><feGaussianBlur stdDeviation="1.5"/></filter>
  <filter color-interpolation-filters="sRGB" id="b2" x="-40%" y="-40%" width="180%" height="180%"><feGaussianBlur stdDeviation="2"/></filter>
  <filter color-interpolation-filters="sRGB" id="b4" x="-50%" y="-50%" width="200%" height="200%"><feGaussianBlur stdDeviation="4"/></filter>
  <clipPath id="skinclip"><path id="skinpath" d="M273.3 186 L274.8 194 L277 203 L280 208.5 L281.2 212 L283 218 L285.6 225.5 Q287.5 229 289.75 230.75 L294.25 233 L295 234.5 Q294 242 291 246 Q286 251 280 254 L270 257.5 L257.5 264 Q250 267 245 270 Q239 275 236 279 Q233 284 232.3 288 Q230.6 302 232 317.3 Q246 316.6 257.5 313.8 L282.5 307 L320 298.75 Q337 295 350 290 Q362 285.5 370 280 Q376 276 380 270 Q384 264 386 259 L377 256.25 Q370 254 365 251.75 Q359 248.5 354.5 245 Q350.5 241.5 347.75 237.5 Q345.5 234 344 230 L343.75 223.75 L336.25 217.75 L325 211 L310 204 L298 197.25 L286.75 191.25 Z"/></clipPath>
</defs>
<g clip-path="url(#pc)">
  <rect x="186" y="144" width="276" height="184" fill="url(#bgl)"/>
  <rect x="186" y="144" width="3" height="184" fill="#0e0e0e" opacity="0.6"/>
  <!-- crown -->
  <path d="M276 143 L352 143 L357 182 L330 200 L273.6 166 Z" fill="url(#crown)" filter="url(#b03)"/>
  <!-- hat band -->
  <path d="M274.6 156.5 Q300 160 355 172 L357 184 Q300 170 273.5 166.5 Z" fill="#0f0f0f" filter="url(#b05)"/>
  <!-- brim top -->
  <path d="M217 170 Q245 168.5 273.5 165.5 L300 169 Q340 176 357 182 Q392 196 405 214 Q409 222 401 231 Q392 238 380 237.5 Q360 233 346 225 L336.25 217.75 L325 211 L310 204 L298 197.25 L286.75 191.25 L273.3 185.4 Q254 177 236 172 Z" fill="url(#brimtop)" filter="url(#b03)"/>
  <!-- dark area behind neck (hair/shadow under brim) -->
  <path d="M343 222 Q352 236 370 250 L392 262 L420 262 L410 236 L380 236 Z" fill="#0d0d0d" filter="url(#b1)"/>
  <!-- SKIN -->
  <use href="#skinpath" fill="url(#skin)" filter="url(#b05)"/>
  <g clip-path="url(#skinclip)">
    <!-- right neck shade -->
    <path d="M336.5 217 L346 222 Q347 232 351 239 Q356 246 365 251 Q373 255 388 259 Q376 263.5 362 262.5 Q350 262 344 260.5 L331 255.5 L331.5 245 Z" fill="url(#neckr)" filter="url(#b08)"/>
    <path d="M339.5 236 Q344 248 351 257" stroke="#a6a6a6" stroke-width="3" fill="none" filter="url(#b15)"/>
    <path d="M345 229 Q347 235 349.5 239 Q353 244 357.5 247.6 Q363 251.6 370 254.6 L380 258" stroke="#101010" stroke-width="2.4" fill="none" filter="url(#b1)"/>
    <!-- soft falloff left of SCM -->
    <path d="M328 214 Q327 235 326 252 L333 256 L337 218 Z" fill="#c4c4c4" filter="url(#b2)"/>
    <path d="M336.8 218 Q334 232 331.8 246 Q331 252 330.6 255" stroke="#3a3a3a" stroke-width="2.8" fill="none" filter="url(#b08)"/>
    <path d="M330.8 253 Q330 258 328.6 262.5" stroke="#6a6a6a" stroke-width="2.2" fill="none" filter="url(#b08)"/>
    <path d="M330.5 254.5 Q337 258.8 344 260.3 Q354 262.6 364 262.2 Q376 261.6 387 258.6" stroke="#303030" stroke-width="2.3" fill="none" filter="url(#b08)"/>
    <ellipse cx="305" cy="214" rx="14" ry="8" fill="#f4f4f4" filter="url(#b4)" transform="rotate(28 305 214)"/>
    <!-- brim cast shadow along edge on face -->
    <path d="M273.3 185 L286.75 191 L298 197 L310 203.8 L325 210.8 L336.25 217.5 L343.75 223.5" stroke="#555" stroke-width="2.2" fill="none" filter="url(#b08)"/>
    <!-- jaw shadow -->
    <path d="M296 234 Q304 232.5 311 229.5 Q321 224.5 329 218" stroke="#bebebe" stroke-width="3.4" fill="none" filter="url(#b15)"/>
    <!-- collarbone -->
    <path d="M257 267.2 Q272 268 288 266.4 Q308 264.4 327.5 262.4" stroke="#9a9a9a" stroke-width="2" fill="none" filter="url(#b08)"/>
    <path d="M284 266.8 Q306 264.8 327.5 262.6" stroke="#6a6a6a" stroke-width="1.8" fill="none" filter="url(#b08)"/>
    <path d="M240 276 Q246 270 257.5 265.5 L270 259.5" stroke="#c6c6c6" stroke-width="6" fill="none" filter="url(#b2)"/>
    <path d="M246 272 Q262 268 300 268 L300 272 Q270 274 250 282 Z" fill="#d2d2d2" filter="url(#b2)"/>
    <ellipse cx="271.5" cy="274" rx="6" ry="2.8" fill="#b0b0b0" filter="url(#b15)"/>
    <ellipse cx="283" cy="272" rx="7" ry="3.4" fill="#fcfcfc" filter="url(#b15)"/>
    <ellipse cx="306" cy="246" rx="12" ry="9" fill="#f6f6f6" filter="url(#b4)"/>
    <path d="M332 266 L372 264 L366 282 L336 290 Z" fill="#dadada" filter="url(#b4)"/>
    <!-- right shoulder tip shade -->
    <path d="M372 266 L388 258 L384 272 L372 282 Z" fill="#b8b8b8" filter="url(#b2)"/>
    <!-- nose -->
    <path d="M284 191.4 Q291 192.4 295 197 Q297.6 202 292 204 Q288 205 284.4 203.4 Q286.6 198 284 191.4 Z" fill="url(#noseg)" filter="url(#b08)"/>
    <ellipse cx="286" cy="203.2" rx="1.6" ry="0.9" fill="#4a4a4a" filter="url(#b05)"/>
    <path d="M279.8 197.5 L283.4 191.5" stroke="#b4b4b4" stroke-width="1" fill="none" filter="url(#b05)"/>
    <ellipse cx="282.3" cy="199.6" rx="1.3" ry="1.3" fill="#fafafa" filter="url(#b05)"/>
    <!-- philtrum / mouth surrounding -->
    <ellipse cx="287" cy="207" rx="3" ry="1.6" fill="#d0d0d0" filter="url(#b08)"/>
    <!-- lips -->
    <path d="M281.8 210.9 L285.25 209.6 L287.6 210.4 L290.5 210.6 Q295 212.4 299.2 215.5 Q296.4 219.6 292.75 220.6 Q288 221 285.25 219.6 Q283.4 218 283 215.75 Z" fill="#3e3e3e" filter="url(#b05)"/>
    <path d="M284.4 216 Q290 215.6 296.6 216.4 Q294.6 219 292 219.6 Q288 219.9 285.6 218.6 Z" fill="#666666" filter="url(#b05)"/>
    <path d="M283 213.6 Q287 214.8 292 214.6 Q296 214.8 298.8 215.5" stroke="#262626" stroke-width="0.9" fill="none" filter="url(#b03)"/>
    <ellipse cx="289" cy="223.4" rx="3.6" ry="1.3" fill="#d4d4d4" filter="url(#b08)"/>
  </g>
  <!-- lobe (brim underside) -->
  <path d="M200.5 180 Q201 175.5 204.7 173.4 Q210 170 217 170 Q227 170.5 236 172 Q254 177 273.3 185.4 L274.8 194 L277 203 L280 208.5 L281.2 212 L282.6 217 Q278 219 265 218 Q252 215.6 240 211 Q227 206 215 198.75 Q208 194 205 190 Q201 185 200.5 180 Z" fill="#040404" filter="url(#b08)"/>
  <!-- rim highlights -->
  <path d="M211.5 196.5 Q208.5 194 207 191.6 Q200 183 201.6 177.5 Q204.5 171 217 170.3 Q230 171 240 173 Q254 176.6 265 181 L273.5 185" stroke="url(#rimg)" stroke-width="1.4" fill="none" filter="url(#b05)"/>
  <path d="M346 225 Q361 232.5 380 237.5 Q392 238.5 401 231 Q409 222 405 214 Q402 211 397.5 209" stroke="url(#rimg2)" stroke-width="1.6" fill="none" filter="url(#b05)"/>
  <!-- dress -->
  <path d="M231 317.4 Q246 316.6 257.5 313.8 L282.5 307 L320 298.75 Q337 295 350 290 Q362 285.5 370 280 Q376 276 380 270 Q384 264 386 259 Q400 262 420 290 L440 330 L231 330 Z" fill="#0b0b0b" filter="url(#b03)"/>
</g>
</svg>
<!--PHOTO-END-->

<!-- WATERMARK -->
<div id="wm" class="abs"></div>
<div id="wmtext" class="abs">软件技巧</div>
</body>
</html>
